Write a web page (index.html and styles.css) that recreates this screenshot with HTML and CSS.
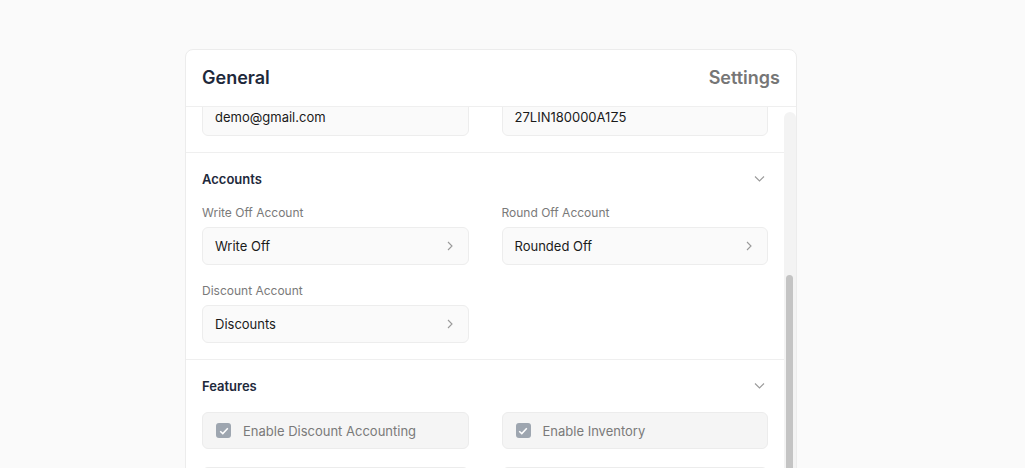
FILE: index.html
```html
<!DOCTYPE html>
<html lang="en">

<head>
    <meta charset="UTF-8">
    <meta name="viewport" content="width=device-width, initial-scale=1.0">

    <title>Settings</title>
    <link rel="stylesheet" href="styles.css">
</head>

<body>

    <div class="card">
        <div class="card-header">
            <h1>General</h1>
            <span class="tab">Settings</span>
        </div>

        <div class="card-body-wrap">
            <div class="card-body" id="settingsBody">
                <section class="section">
                    <div class="grid">
                        <div class="field">
                            <label>Company Name</label>
                            <div class="control">Lin Industries</div>
                        </div>
                        <div class="field">
                            <label>Full Name</label>
                            <div class="control">Lin</div>
                        </div>
                        <div class="field">
                            <label>Country</label>
                            <div class="control">India</div>
                        </div>
                        <div class="field">
                            <label>Currency</label>
                            <div class="control">INR</div>
                        </div>
                        <div class="field">
                            <label>Fiscal Year Start Date</label>
                            <div class="control">01/04/2023</div>
                        </div>
                        <div class="field">
                            <label>Fiscal Year End Date</label>
                            <div class="control">31/03/2024</div>
                        </div>
                        <div class="field">
                            <label>Email</label>
                            <div class="control">demo@gmail.com</div>
                        </div>
                        <div class="field">
                            <label>GSTIN</label>
                            <div class="control">27LIN180000A1Z5</div>
                        </div>
                    </div>
                </section>

                <section class="section" id="accounts">
                    <div class="section-title">
                        <h2>Accounts</h2>
                        <svg class="chevron-down" width="11" height="6" viewBox="0 0 11 6"><path d="M1 0.5l4.5 4.5 4.5-4.5" /></svg>
                    </div>
                    <div class="grid">
                        <div class="field">
                            <label>Write Off Account</label>
                            <div class="control">Write Off
                                <svg class="chevron-right" width="6" height="10" viewBox="0 0 6 10"><path d="M1 1l4 4-4 4" /></svg>
                            </div>
                        </div>
                        <div class="field">
                            <label>Round Off Account</label>
                            <div class="control">Rounded Off
                                <svg class="chevron-right" width="6" height="10" viewBox="0 0 6 10"><path d="M1 1l4 4-4 4" /></svg>
                            </div>
                        </div>
                        <div class="field">
                            <label>Discount Account</label>
                            <div class="control">Discounts
                                <svg class="chevron-right" width="6" height="10" viewBox="0 0 6 10"><path d="M1 1l4 4-4 4" /></svg>
                            </div>
                        </div>
                    </div>
                </section>

                <section class="section">
                    <div class="section-title">
                        <h2>Features</h2>
                        <svg class="chevron-down" width="11" height="6" viewBox="0 0 11 6"><path d="M1 0.5l4.5 4.5 4.5-4.5" /></svg>
                    </div>
                    <div class="grid">
                        <div class="check">
                            <span class="box"><svg width="10" height="8" viewBox="0 0 10 8"><path d="M1.2 4.2l2.6 2.4 5-5.4" /></svg></span>
                            Enable Discount Accounting
                        </div>
                        <div class="check">
                            <span class="box"><svg width="10" height="8" viewBox="0 0 10 8"><path d="M1.2 4.2l2.6 2.4 5-5.4" /></svg></span>
                            Enable Inventory
                        </div>
                        <div class="check">
                            <span class="box"><svg width="10" height="8" viewBox="0 0 10 8"><path d="M1.2 4.2l2.6 2.4 5-5.4" /></svg></span>
                            Enable Price List
                        </div>
                        <div class="check">
                            <span class="box"><svg width="10" height="8" viewBox="0 0 10 8"><path d="M1.2 4.2l2.6 2.4 5-5.4" /></svg></span>
                            Enable Form Customization
                        </div>
                        <div class="check">
                            <span class="box"><svg width="10" height="8" viewBox="0 0 10 8"><path d="M1.2 4.2l2.6 2.4 5-5.4" /></svg></span>
                            Enable Invoice Returns
                        </div>
                        <div class="check">
                            <span class="box"><svg width="10" height="8" viewBox="0 0 10 8"><path d="M1.2 4.2l2.6 2.4 5-5.4" /></svg></span>
                            Enable Loyalty Program
                        </div>
                    </div>
                </section>
            </div>

            <div class="scrollbar" id="track">
                <div class="thumb" id="thumb"></div>
            </div>
        </div>
    </div>

    <script>
        window.onload = function () {
            const body = document.getElementById('settingsBody');
            const accounts = document.getElementById('accounts');
            const track = document.getElementById('track');
            const thumb = document.getElementById('thumb');

            body.scrollTop += accounts.getBoundingClientRect().top - 153;

            const len = track.clientHeight;
            thumb.style.top = (body.scrollTop / body.scrollHeight * len) + 'px';
            thumb.style.height = (body.clientHeight / body.scrollHeight * len) + 'px';
        }
    </script>
</body>

</html>
```

FILE: styles.css
```css
html,
body {
    overflow: hidden;
}

body {
    margin: 0;
    background-color: #fafafa;
    font-family: 'Inter', 'Noto Sans', sans-serif;
    color: #1f2937;
}

.card {
    width: 612px;
    height: 560px;
    margin: 49px 0 0 185px;
    box-sizing: border-box;
    background-color: white;
    border: 1px solid #ececec;
    border-radius: 8px;
    display: flex;
    flex-direction: column;
    overflow: hidden;
}

.card-header {
    height: 56px;
    flex: none;
    display: flex;
    align-items: center;
    justify-content: space-between;
    padding: 0 16px;
    border-bottom: 1px solid #efefef;
}

.card-header h1 {
    margin: 0 0 1px;
    font-size: 18px;
    font-weight: 600;
    color: #1e293b;
}

.card-header .tab {
    margin-bottom: 1px;
    font-size: 18px;
    font-weight: 600;
    color: #767676;
}

.card-body-wrap {
    flex: 1;
    min-height: 0;
    position: relative;
}

.card-body {
    height: 100%;
    overflow-y: scroll;
    scrollbar-width: none;
    padding: 0 12px 96px 0;
    box-sizing: border-box;
}

.scrollbar {
    position: absolute;
    top: 5px;
    bottom: 5px;
    right: 0;
    width: 12px;
    background-color: #f3f3f3;
    border-radius: 6px;
}

.thumb {
    position: absolute;
    left: 2px;
    width: 7px;
    background-color: #c4c4c4;
    border-radius: 4px;
}

.section {
    padding: 16px;
    border-bottom: 1px solid #efefef;
}

.section-title {
    height: 20px;
    display: flex;
    align-items: center;
    justify-content: space-between;
    margin-bottom: 16px;
}

.section-title h2 {
    margin: 0;
    font-size: 13px;
    font-weight: 600;
    color: #1e293b;
}

.chevron-down {
    margin-right: 3px;
}

.chevron-down path,
.chevron-right path {
    fill: none;
    stroke: #9a9a9a;
    stroke-width: 1.1;
}

.grid {
    display: grid;
    grid-template-columns: 1fr 1fr;
    column-gap: 33px;
    row-gap: 18px;
}

.field label {
    display: block;
    font-size: 12px;
    line-height: 16px;
    color: #7a7a7a;
    margin-bottom: 6px;
}

.control {
    height: 38px;
    box-sizing: border-box;
    display: flex;
    align-items: center;
    justify-content: space-between;
    padding: 0 15px 0 12px;
    background-color: #fafafa;
    border: 1px solid #ededed;
    border-radius: 6px;
    font-size: 13px;
    color: #1a1a1a;
}

.check {
    height: 37px;
    box-sizing: border-box;
    display: flex;
    align-items: center;
    gap: 12px;
    padding-left: 13px;
    background-color: #f5f5f5;
    border: 1px solid #ececec;
    border-radius: 6px;
    font-size: 13px;
    color: #7a7a7a;
}

.box {
    width: 15px;
    height: 15px;
    border-radius: 3px;
    background-color: #9ea6b0;
    display: flex;
    align-items: center;
    justify-content: center;
}

.box path {
    fill: none;
    stroke: white;
    stroke-width: 1.5;
}
```
